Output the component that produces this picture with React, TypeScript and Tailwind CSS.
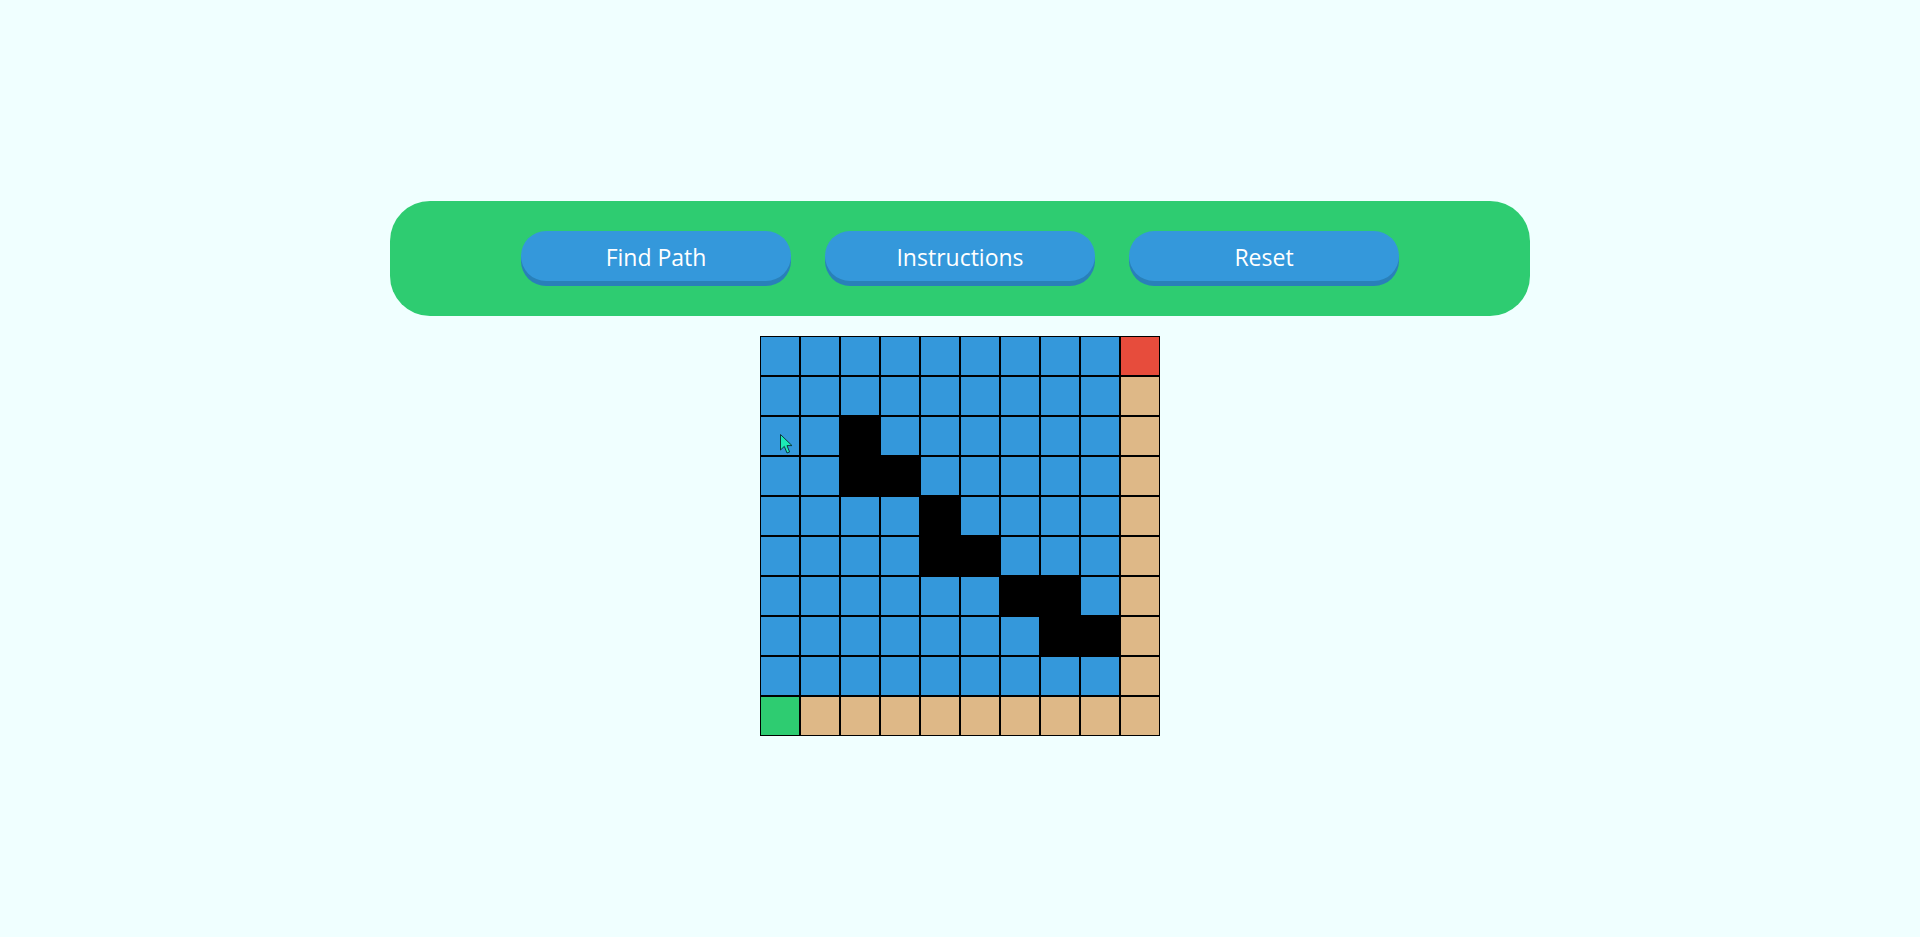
import React from "react";

const walls = new Set(["2-2", "3-2", "3-3", "4-4", "5-4", "5-5", "6-6", "6-7", "7-7", "7-8"]);

function cellClass(r: number, c: number): string {
  if (r === 0 && c === 9) return "bg-[#e74c3c]";
  if (r === 9 && c === 0) return "bg-[#2ecc71]";
  if (c === 9 || r === 9) return "bg-[#deb887]";
  if (walls.has(`${r}-${c}`)) return "bg-black";
  return "bg-[#3498db]";
}

function Btn({ label }: { label: string }) {
  return (
    <button className="w-[270px] h-[50px] rounded-full bg-[#3498db] text-white text-[23px] shadow-[0_5px_0_#2980b9] flex items-center justify-center leading-none pt-[2px]">
      {label}
    </button>
  );
}

export default function App() {
  const cells = [];
  for (let r = 0; r < 10; r++) {
    for (let c = 0; c < 10; c++) {
      cells.push(<div key={`${r}-${c}`} className={`w-10 h-10 border border-black ${cellClass(r, c)}`} />);
    }
  }
  return (
    <div className="h-screen w-full bg-[#f0ffff] flex flex-col items-center justify-center gap-[20px] font-['Open_Sans',sans-serif]">
      <div className="w-[1140px] h-[115px] rounded-[40px] bg-[#2ecc71] flex items-start justify-center gap-[34px] pt-[30px]">
        <Btn label="Find Path" />
        <Btn label="Instructions" />
        <Btn label="Reset" />
      </div>
      <div className="relative grid grid-cols-10 w-[400px] h-[400px]">
        {cells}
        <svg className="absolute left-[20px] top-[98px]" width="13" height="21" viewBox="0 0 13 21">
          <path d="M0.5 0.5 L0.5 16 L4.3 12.4 L7 19 L9.6 18 L7 11.6 L12 11.6 Z" fill="#1de9b6" stroke="#0b3b40" strokeWidth="1" strokeLinejoin="miter" />
        </svg>
      </div>
    </div>
  );
}
